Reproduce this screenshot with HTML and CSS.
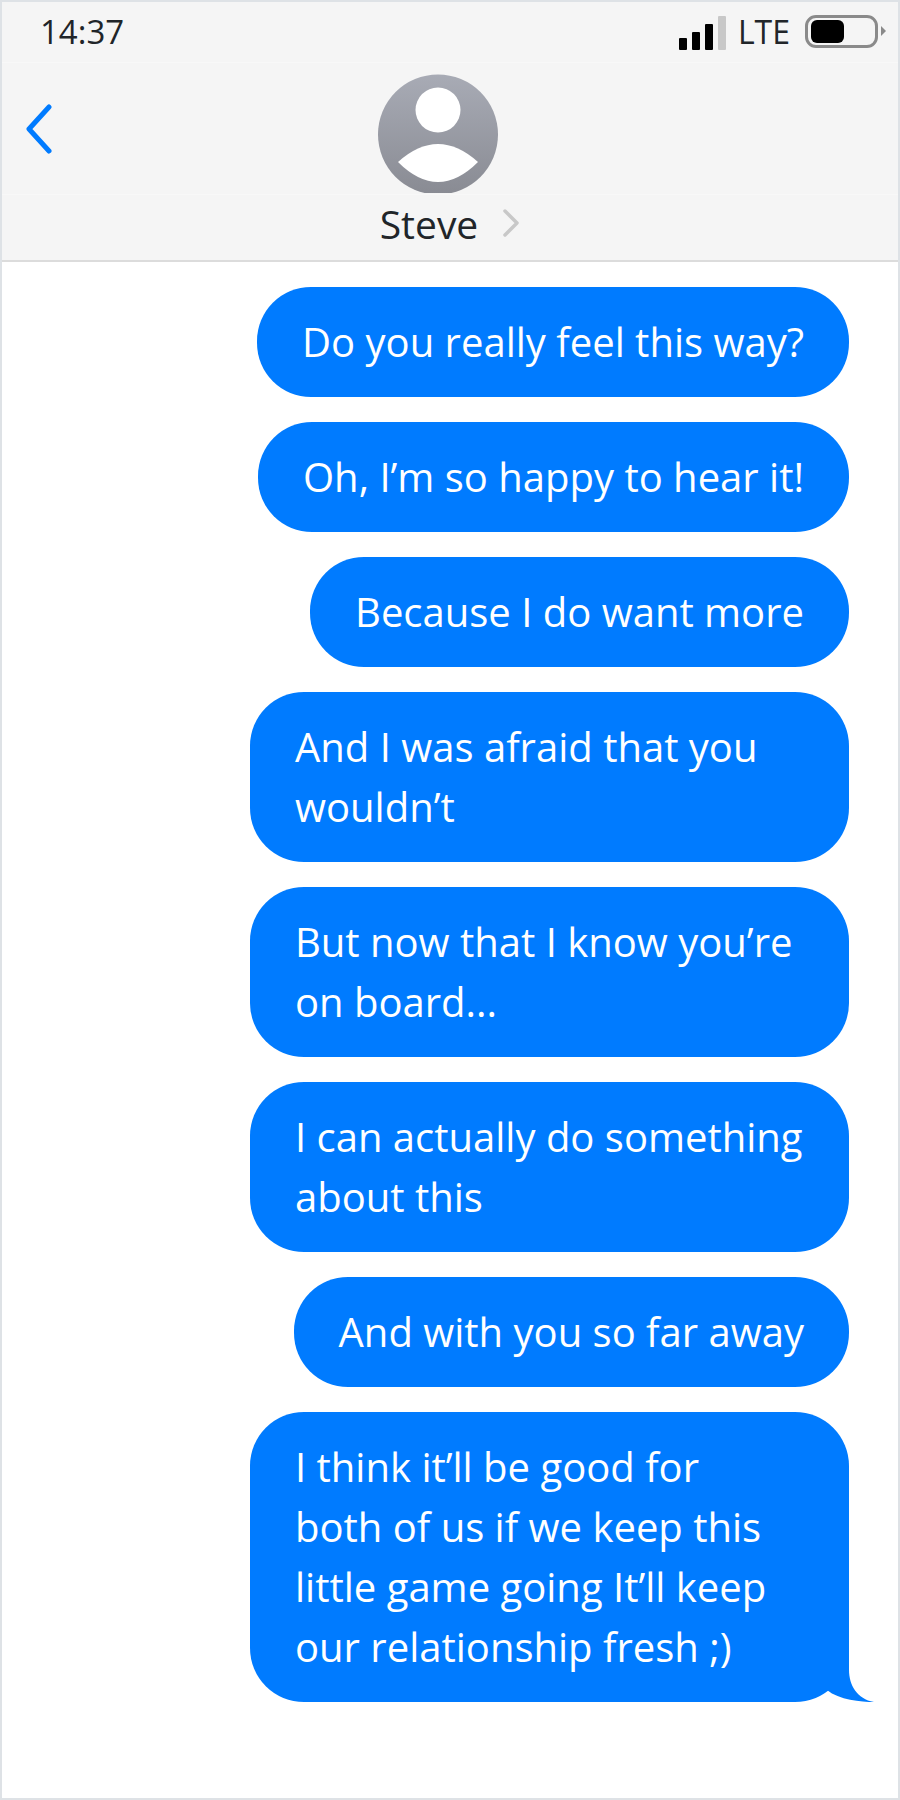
FILE: index.html
```html
<!DOCTYPE html>
<html lang="en">
  <head>
    <meta charset="UTF-8" />
    <meta name="viewport" content="width=device-width, initial-scale=1.0" />
    <title>Messages</title>
    <link rel="stylesheet" href="styles.css">
  </head>
  <body>
    <div class="phone">
      <div class="top">
        <div class="status-bar">
          <span class="time">14:37</span>
          <div class="status-right">
            <div class="signal">
              <span class="bar bar-1"></span>
              <span class="bar bar-2"></span>
              <span class="bar bar-3"></span>
              <span class="bar bar-4"></span>
            </div>
            <span class="network">LTE</span>
            <div class="battery"><span class="battery-level"></span></div>
            <span class="battery-nub"></span>
          </div>
        </div>
        <div class="nav">
          <svg class="back" width="26" height="50" viewBox="0 0 26 50">
            <path d="M23 3 L3 25 L23 47" fill="none" stroke="#007bff" stroke-width="5" stroke-linecap="round" stroke-linejoin="round" />
          </svg>
          <svg class="avatar" width="120" height="119" viewBox="0 0 120 119">
            <defs>
              <linearGradient id="avatar-bg" x1="0" y1="0" x2="0" y2="1">
                <stop offset="0" stop-color="#a8abb5" />
                <stop offset="1" stop-color="#898b93" />
              </linearGradient>
            </defs>
            <circle cx="60" cy="60.5" r="60" fill="url(#avatar-bg)" />
            <circle cx="60" cy="36" r="22.5" fill="#fff" />
            <path d="M20 88 Q60 52 100 88 Q60 128 20 88 Z" fill="#fff" />
          </svg>
        </div>
        <div class="contact">
          <span class="contact-name">Steve</span>
          <svg class="contact-arrow" width="18" height="30" viewBox="0 0 18 30">
            <path d="M3 3 L15 15 L3 27" fill="none" stroke="#c8c8c8" stroke-width="3.5" stroke-linecap="round" stroke-linejoin="round" />
          </svg>
        </div>
      </div>

      <div class="messages">
        <div class="bubble">Do you really feel this way?</div>
        <div class="bubble">Oh, I’m so happy to hear it!</div>
        <div class="bubble">Because I do want more</div>
        <div class="bubble">And I was afraid that you wouldn’t</div>
        <div class="bubble">But now that I know you’re on board...</div>
        <div class="bubble">I can actually do something about this</div>
        <div class="bubble">And with you so far away</div>
        <div class="bubble last">
          I think it’ll be good for<br>both of us if we keep this little game going It’ll keep our relationship fresh ;)
          <svg class="tail" width="47" height="54" viewBox="0 0 47 54">
            <path d="M0 0 L22 0 L22 22 C22 37 30 51 47 54 C34 54 12 52 0 42 Z" fill="#007bff" />
          </svg>
        </div>
      </div>
    </div>
  </body>
</html>
```

FILE: styles.css
```css
* {
  margin: 0;
  padding: 0;
  box-sizing: border-box;
}

body {
  font-family: "Open Sans", "Noto Sans", sans-serif;
  background: #fff;
  color: #212529;
}

.phone {
  width: 900px;
  height: 1800px;
  border: 2px solid #dee2e6;
  background: #fff;
}

.top {
  background: #f5f5f5;
  border-bottom: 2px solid #dcdcdc;
}

.status-bar {
  height: 61px;
  display: flex;
  justify-content: space-between;
  align-items: center;
  padding: 0 12px 2px 38px;
  border-bottom: 1px solid #f8f8f8;
  font-size: 32px;
}

.time {
  font-size: 33px;
}

.status-right {
  display: flex;
  align-items: center;
}

.signal {
  display: flex;
  align-items: flex-end;
  gap: 5px;
  height: 34px;
  margin: 0 12px 0 0;
  position: relative;
  top: 2px;
}

.bar {
  width: 8px;
  background: #000;
  border-radius: 1px;
}

.bar-1 {
  height: 12px;
}

.bar-2 {
  height: 18px;
}

.bar-3 {
  height: 26px;
}

.bar-4 {
  height: 34px;
  background: #c8c8c8;
}

.network {
  margin-right: 15px;
}

.battery {
  width: 73px;
  height: 33px;
  border: 3px solid #8a8a8a;
  border-radius: 11px;
  padding: 2px 3px;
}

.battery-level {
  display: block;
  width: 33px;
  height: 100%;
  background: #000;
  border-radius: 6px;
}

.battery-nub {
  width: 0;
  height: 0;
  margin-left: 3px;
  border-left: 5px solid #8a8a8a;
  border-top: 5px solid transparent;
  border-bottom: 5px solid transparent;
}

.nav {
  height: 132px;
  display: flex;
  justify-content: center;
  align-items: flex-start;
  position: relative;
  padding: 11px 24px 0 0;
  border-bottom: 1px solid #f8f8f8;
}

.back {
  position: absolute;
  left: 24px;
  top: 41px;
}

.contact {
  height: 65px;
  display: flex;
  justify-content: center;
  align-items: center;
  gap: 24px;
  padding-bottom: 9px;
  font-size: 39px;
}

.messages {
  display: flex;
  flex-direction: column;
  align-items: flex-end;
  gap: 25px;
  padding: 25px 49px 0 0;
}

.bubble {
  position: relative;
  max-width: 599px;
  padding: 25px 45px;
  border-radius: 54px;
  background: #007bff;
  color: #fff;
  font-size: 40px;
  line-height: 60px;
}

.tail {
  position: absolute;
  right: -25px;
  bottom: 0;
}
```
